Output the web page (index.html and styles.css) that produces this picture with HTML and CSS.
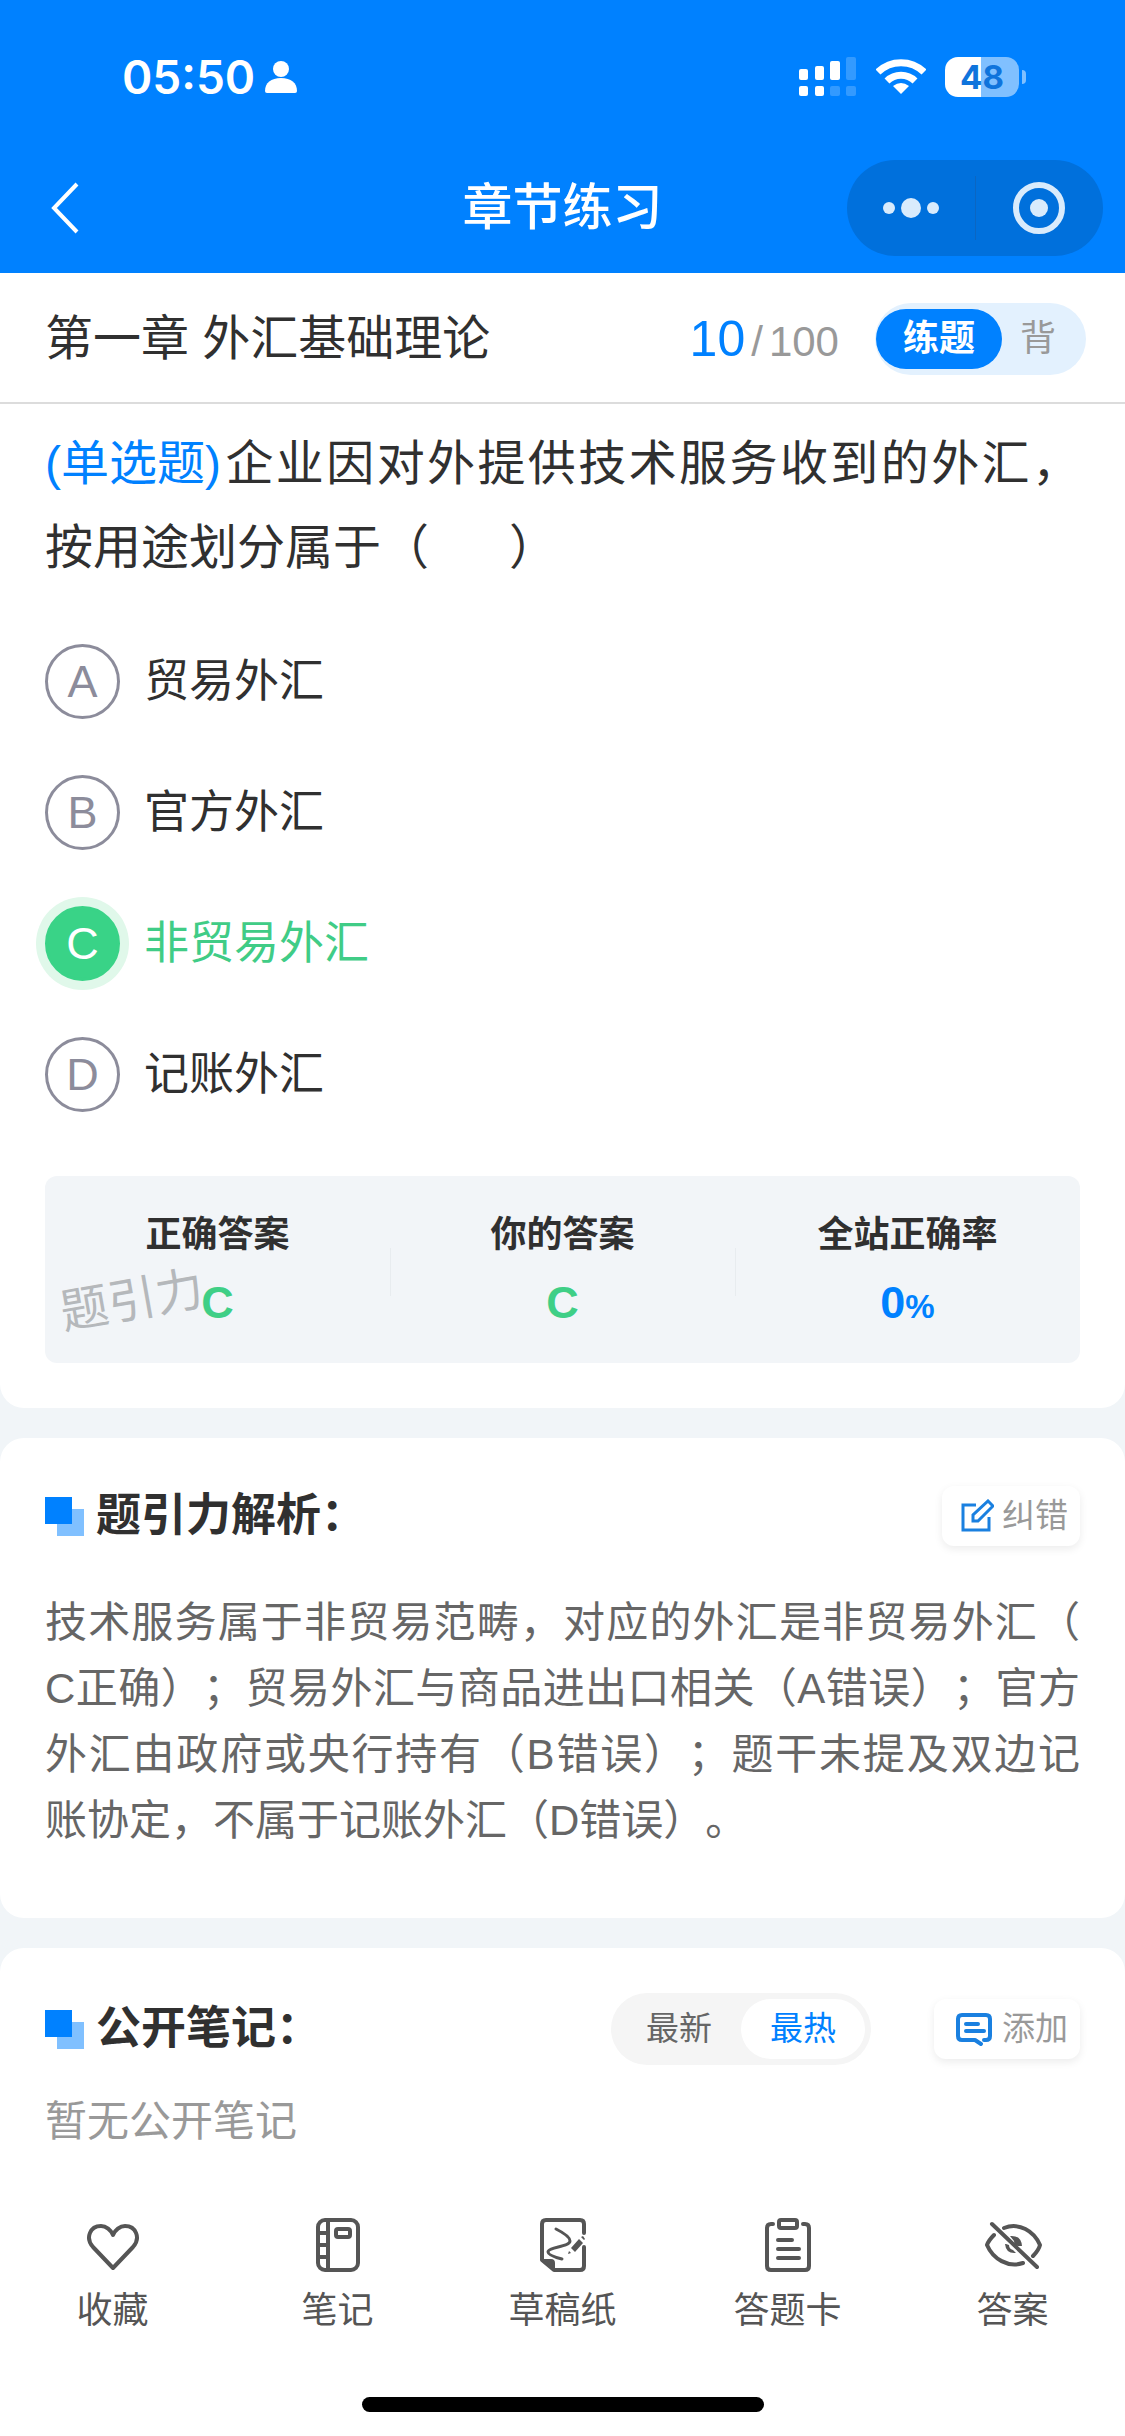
FILE: index.html
```html
<!DOCTYPE html>
<html lang="zh-CN">
<head>
<meta charset="utf-8">
<meta name="viewport" content="width=device-width, initial-scale=1">
<title>章节练习</title>
<link rel="stylesheet" href="styles.css">
</head>
<body>
<div class="app">
  <header class="header">
    <div class="status">
      <div class="status-left">
        <span class="time">05:50</span>
        <svg width="32" height="34" viewBox="0 0 32 34" fill="#fff" aria-hidden="true"><circle cx="16" cy="9" r="8"/><path d="M0 31c0-8 6-13 16-13s16 5 16 13q0 2-2 2H2q-2 0-2-2z"/></svg>
      </div>
      <div class="status-right">
        <svg width="58" height="40" viewBox="0 0 58 40" fill="#fff" aria-hidden="true">
          <rect x="0" y="12" width="9" height="11" rx="2"/><rect x="16" y="9" width="9" height="14" rx="2"/><rect x="31" y="4" width="10" height="19" rx="2"/><rect x="47" y="0" width="10" height="23" rx="2" opacity=".2"/>
          <rect x="0" y="29" width="9" height="10" rx="2"/><rect x="16" y="29" width="9" height="10" rx="2"/><rect x="31" y="29" width="10" height="10" rx="2" opacity=".2"/><rect x="47" y="29" width="10" height="10" rx="2" opacity=".2"/>
        </svg>
        <svg width="50" height="37" viewBox="0 0 50 37" aria-hidden="true"><g fill="none" stroke="#fff" stroke-width="7"><path d="M2 14a33 33 0 0 1 46 0"/><path d="M11 23a20 20 0 0 1 28 0"/></g><path d="M25 36l-8-8q8-6 16 0z" fill="#fff"/></svg>
        <div class="battery"><span class="battery-level">48</span><i class="battery-tip"></i></div>
      </div>
    </div>
    <nav class="nav">
      <button class="back" aria-label="返回"><svg width="28" height="52" viewBox="0 0 28 52" fill="none" stroke="#fff" stroke-width="4"><path d="M26 2L3 26l23 24"/></svg></button>
      <h1 class="nav-title">章节练习</h1>
      <div class="capsule">
        <button class="capsule-btn" aria-label="更多"><svg width="60" height="24" viewBox="0 0 60 24" fill="#d9ebfc"><circle cx="8" cy="12" r="6"/><circle cx="30" cy="12" r="10"/><circle cx="52" cy="12" r="6"/></svg></button>
        <button class="capsule-btn" aria-label="关闭"><svg width="52" height="52" viewBox="0 0 52 52"><circle cx="26" cy="26" r="23" fill="none" stroke="#d9ebfc" stroke-width="6"/><circle cx="26" cy="26" r="9" fill="#d9ebfc"/></svg></button>
      </div>
    </nav>
  </header>

  <main class="main">
    <section class="card card-first">
      <div class="chapter">
        <h2 class="chapter-title">第一章 外汇基础理论</h2>
        <div class="progress"><span class="current">10</span><span class="slash">/</span><span class="total">100</span></div>
        <div class="mode"><button class="mode-btn mode-on">练题</button><button class="mode-btn">背</button></div>
      </div>
      <div class="question">
        <p class="stem"><span class="kind">(单选题)</span>企业因对外提供技术服务收到的外汇，按用途划分属于（&nbsp;&nbsp;&nbsp;&nbsp;&nbsp;&nbsp;）</p>
        <div class="options">
          <button class="option"><span class="letter">A</span>贸易外汇</button>
          <button class="option"><span class="letter">B</span>官方外汇</button>
          <button class="option option-right"><span class="letter">C</span>非贸易外汇</button>
          <button class="option"><span class="letter">D</span>记账外汇</button>
        </div>
        <div class="result">
          <div class="stat"><span class="stat-label">正确答案</span><span class="stat-value">C</span></div>
          <div class="stat"><span class="stat-label">你的答案</span><span class="stat-value">C</span></div>
          <div class="stat"><span class="stat-label">全站正确率</span><span class="stat-value stat-rate">0<small>%</small></span></div>
          <span class="watermark">题引力</span>
        </div>
      </div>
    </section>

    <section class="card">
      <div class="card-head">
        <h3 class="card-title"><i class="mark"></i>题引力解析：</h3>
        <button class="action"><svg width="34" height="34" viewBox="0 0 34 34" fill="none" stroke="#1a80e0" stroke-width="3"><path d="M16 6H3v25h26V18"/><path d="M13 22v-6L28 2l5 5-15 15z"/></svg>纠错</button>
      </div>
      <p class="analysis">技术服务属于非贸易范畴，对应的外汇是非贸易外汇（C正确）；贸易外汇与商品进出口相关（A错误）；官方外汇由政府或央行持有（B错误）；题干未提及双边记账协定，不属于记账外汇（D错误）。</p>
    </section>

    <section class="card card-last">
      <div class="card-head">
        <h3 class="card-title"><i class="mark"></i>公开笔记：</h3>
        <div class="sort"><button class="sort-btn">最新</button><button class="sort-btn sort-on">最热</button></div>
        <button class="action"><svg width="42" height="34" viewBox="-5 0 42 34" fill="none" stroke="#1a80e0" stroke-width="4" stroke-linecap="round" stroke-linejoin="round"><path d="M27 28h2q4 0 4-4V7q0-4-4-4H5Q1 3 1 7v17q0 4 4 4h13l6 4"/><path d="M9 12h12M9 19h18"/></svg>添加</button>
      </div>
      <p class="empty">暂无公开笔记</p>
    </section>
  </main>

  <footer class="footer">
    <div class="tabs">
      <button class="tab"><svg width="56" height="56" viewBox="0 0 56 56"><path d="M28 51L8 30C0 21 5 9 16 9c5 0 10 4 12 9 2-5 7-9 12-9 11 0 16 12 8 21z"/></svg>收藏</button>
      <button class="tab"><svg width="56" height="56" viewBox="0 0 56 56"><rect x="8" y="3" width="40" height="50" rx="7"/><path d="M18 3v50M8 16h10M8 28h10M8 40h10"/><rect x="26" y="12" width="14" height="8" rx="2"/></svg>笔记</button>
      <button class="tab"><svg width="56" height="56" viewBox="0 0 56 56"><path d="M49 16V7q0-4-4-4H11q-4 0-4 4v36l12 10h26q4 0 4-4V30"/><path d="M21 12c8 4 14 8 14 12 0 6-22 6-22 11 0 3 6 5 14 7" stroke-width="3"/><path d="M7 43h9q3 0 3 3v7z" fill="#555" stroke-width="2"/><path d="M36 31l8-9 4 4-8 9zM34 34l2 2-3 1zM46 20l2-1 2 3-1 1z" fill="#555" stroke="none"/></svg>草稿纸</button>
      <button class="tab"><svg width="56" height="56" viewBox="0 0 56 56"><path d="M13 7h-2q-4 0-4 4v38q0 4 4 4h34q4 0 4-4V11q0-4-4-4h-2"/><rect x="19" y="3" width="18" height="8" rx="2"/><path d="M18 23h14M18 32h21M18 41h21"/></svg>答题卡</button>
      <button class="tab"><svg width="60" height="56" viewBox="0 0 60 56"><path d="M21 11C36 5 51 14 57 28c-1 4-4 8-7 11M11 18c-3 3-6 7-7 10 6 14 21 23 36 18"/><path d="M9 7l45 43"/><path d="M27 19q11-1 12 10h-4q-4-1-4-5zM22 27h1l3 1q0 4 4 5l3 3q-10 1-11-9z" fill="#555" stroke="none"/></svg>答案</button>
    </div>
    <div class="home"></div>
  </footer>
</div>
</body>
</html>
```

FILE: styles.css
```css
* { box-sizing: border-box; }
body {
  margin: 0;
  background: #fff;
  color: #303030;
  font-family: "Liberation Sans", "Noto Sans CJK SC", sans-serif;
  text-spacing-trim: space-all;
}
h1, h2, h3, p { margin: 0; font-weight: 400; }
button {
  padding: 0;
  border: 0;
  background: none;
  color: inherit;
  font: inherit;
  cursor: pointer;
}
svg { display: block; flex: none; }
.app { display: flex; flex-direction: column; min-height: 100vh; }

/* header */
.header { background: #0081ff; color: #fff; }
.status {
  display: flex;
  justify-content: space-between;
  align-items: center;
  height: 153px;
  padding: 0 106px 0 122px;
}
.status-left { display: flex; align-items: center; gap: 10px; }
.time { font: 600 46px/56px Inter, sans-serif; }
.status-right { display: flex; align-items: center; gap: 19px; }
.battery {
  position: relative;
  width: 74px;
  height: 40px;
  border-radius: 13px;
  background: linear-gradient(90deg, #fff 48%, #80c0ff 48%);
  color: #0f74dc;
  font: 700 33px/40px Inter, sans-serif;
  text-align: center;
}
.battery-tip {
  position: absolute;
  left: 77px;
  top: 13px;
  width: 4px;
  height: 14px;
  border-radius: 0 4px 4px 0;
  background: #80c0ff;
}
.nav {
  display: grid;
  grid-template-columns: 1fr auto 1fr;
  align-items: center;
  height: 120px;
  padding: 0 22px 10px;
}
.back { justify-self: start; padding-left: 29px; }
.nav-title { font-size: 50px; line-height: 60px; font-weight: 500; }
.capsule {
  justify-self: end;
  display: flex;
  width: 256px;
  height: 96px;
  border-radius: 48px;
  background: #0070dc;
}
.capsule-btn { flex: 1; display: flex; align-items: center; justify-content: center; }
.capsule-btn + .capsule-btn { position: relative; }
.capsule-btn + .capsule-btn::before {
  content: "";
  position: absolute;
  left: 0;
  top: 16px;
  bottom: 16px;
  width: 1px;
  background: #0b66c2;
}

/* cards */
.main { flex: 1; display: flex; flex-direction: column; gap: 30px; background: #f1f5f8; }
.card { padding: 48px 45px 64px; border-radius: 24px; background: #fff; }
.card-first { padding: 0 0 45px; border-radius: 0 0 24px 24px; }
.card-last { flex: 1; padding: 51px 45px 0; border-radius: 24px 24px 0 0; }

.chapter {
  display: flex;
  align-items: center;
  height: 131px;
  padding: 3px 39px 0 45px;
  border-bottom: 2px solid #dcdcdc;
}
.chapter-title { flex: 1; font-size: 48px; line-height: 60px; }
.progress { display: flex; align-items: baseline; gap: 6px; margin-right: 36px; color: #999; font-size: 42px; }
.current { color: #0081ff; font-size: 50px; line-height: 60px; }
.mode {
  display: flex;
  align-items: center;
  height: 72px;
  padding: 0 30px 0 1px;
  border-radius: 36px;
  background: #e3f1fe;
  gap: 18px;
}
.mode-btn { color: #999; font-size: 36px; line-height: 60px; }
.mode-on {
  width: 126px;
  border-radius: 30px;
  background: #0081ff;
  color: #fff;
  font-weight: 700;
}

/* question */
.question { padding: 18px 45px 0; }
.stem { font-size: 48px; line-height: 84px; text-align: justify; }
.kind { display: inline-block; margin-right: 2px; color: #0081ff; }
.options { display: flex; flex-direction: column; gap: 56px; margin-top: 54px; }
.option {
  display: flex;
  align-items: center;
  gap: 24px;
  font-size: 45px;
  line-height: 60px;
}
.letter {
  width: 75px;
  height: 75px;
  border: 3px solid #8c8c9b;
  border-radius: 50%;
  color: #8c8c9b;
  line-height: 69px;
}
.option-right { color: #40cc86; }
.option-right .letter {
  border-color: #39d387;
  background: #39d387;
  color: #fff;
  box-shadow: 0 0 0 9px #e0f8ea;
}
.result {
  position: relative;
  display: grid;
  grid-template-columns: repeat(3, 1fr);
  margin-top: 64px;
  padding: 29px 0 30px;
  border-radius: 12px;
  background: #f2f5f8;
}
.stat { position: relative; display: flex; flex-direction: column; align-items: center; gap: 8px; }
.stat + .stat::before {
  content: "";
  position: absolute;
  left: 0;
  top: 43px;
  width: 1px;
  height: 48px;
  background: #e8ecef;
}
.stat-label { font-size: 36px; line-height: 60px; font-weight: 700; }
.stat-value { color: #3fcf86; font-size: 45px; line-height: 60px; font-weight: 700; }
.stat-rate { color: #0081ff; }
.stat-rate small { font-size: 33px; line-height: 33px; }
.watermark {
  position: absolute;
  left: 15px;
  top: 95px;
  color: #b5b8bb;
  font-size: 48px;
  line-height: 60px;
  transform: rotate(-10deg);
}

/* analysis and notes */
.card-head { display: flex; align-items: center; gap: 63px; height: 60px; }
.card-title {
  flex: 1;
  display: flex;
  align-items: center;
  gap: 12px;
  font-size: 45px;
  line-height: 60px;
  font-weight: 700;
}
.mark {
  width: 39px;
  height: 39px;
  background:
    linear-gradient(#0081ff, #0081ff) 0 0 / 27px 27px no-repeat,
    linear-gradient(#80c0ff, #80c0ff) 100% 100% / 27px 27px no-repeat;
}
.action {
  display: flex;
  align-items: center;
  gap: 8px;
  height: 60px;
  padding: 0 12px 0 18px;
  border-radius: 12px;
  color: #999;
  font-size: 33px;
  line-height: 60px;
  box-shadow: 0 3px 8px rgba(0, 0, 0, 0.08);
}
.analysis {
  margin-top: 44px;
  color: #666;
  font-size: 42px;
  line-height: 66px;
  text-align: justify;
  line-break: anywhere;
}
.sort { display: flex; align-items: center; height: 72px; padding: 6px; border-radius: 36px; background: #f5f5f5; }
.sort-btn { width: 124px; border-radius: 30px; color: #666; font-size: 33px; line-height: 60px; }
.sort-on { background: #fff; color: #0081ff; }
.empty { margin-top: 33px; color: #999; font-size: 42px; line-height: 60px; }

/* bottom bar */
.footer { background: #fff; padding: 24px 0; }
.tabs { display: grid; grid-template-columns: repeat(5, 1fr); }
.tab {
  display: flex;
  flex-direction: column;
  align-items: center;
  gap: 8px;
  color: #555;
  font-size: 36px;
  line-height: 60px;
}
.tab svg { fill: none; stroke: #555; stroke-width: 4; stroke-linecap: round; stroke-linejoin: round; }
.home { width: 402px; max-width: 40%; height: 15px; margin: 56px auto 0; border-radius: 8px; background: #000; }
```
